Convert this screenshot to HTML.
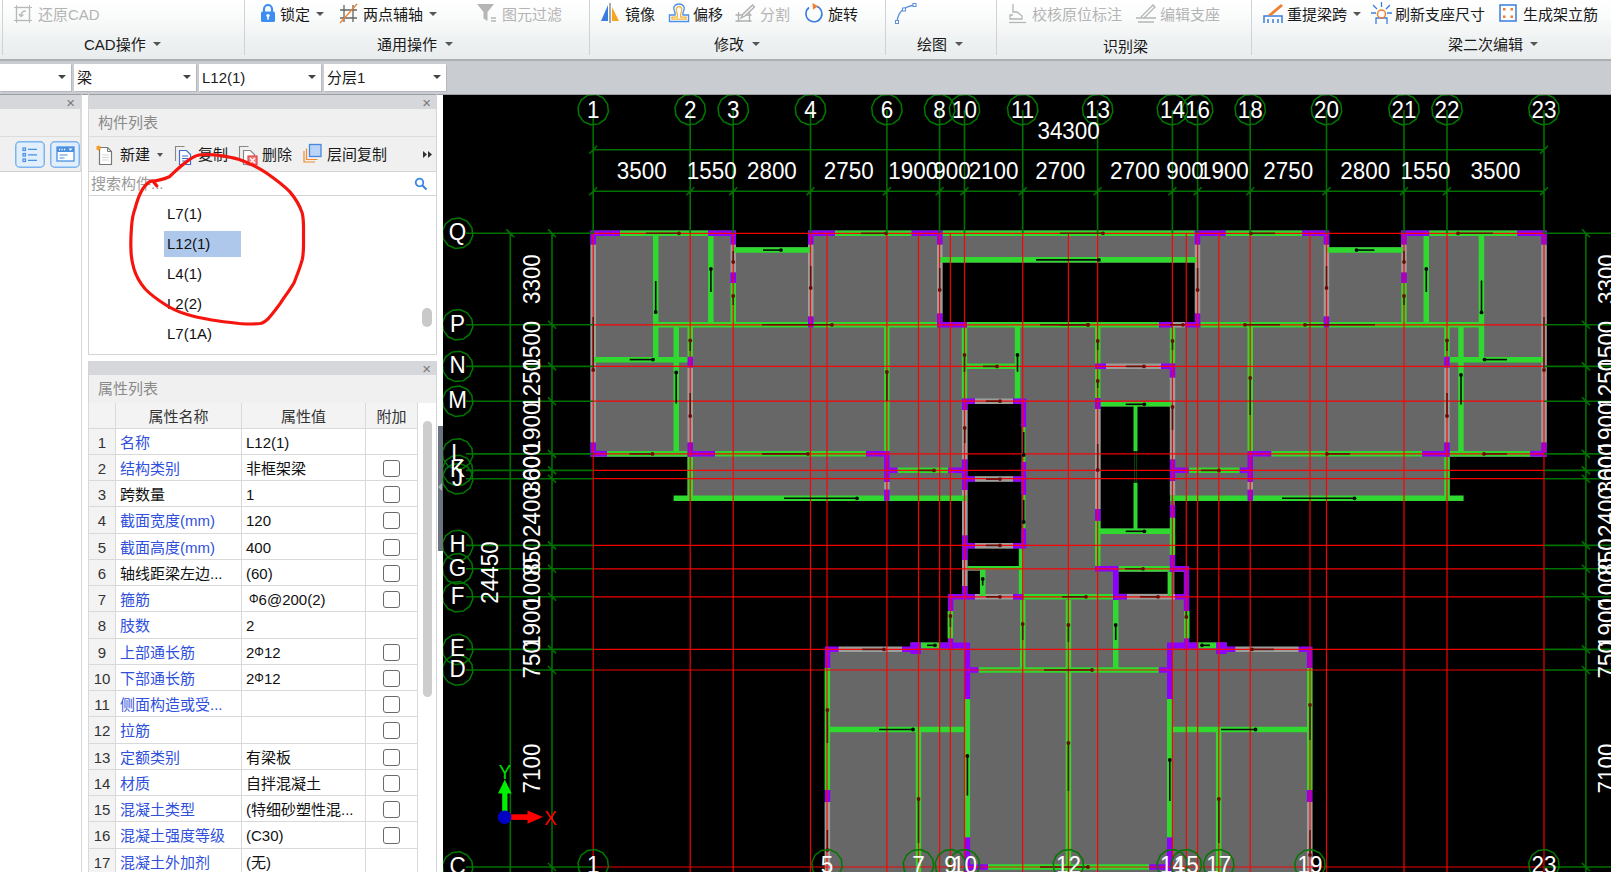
<!DOCTYPE html>
<html lang="zh-CN">
<head>
<meta charset="utf-8">
<title>CAD</title>
<style>
*{box-sizing:border-box;margin:0;padding:0}
html,body{width:1611px;height:872px;overflow:hidden;background:#fff}
body{position:relative;font-family:"Liberation Sans","Noto Sans CJK SC",sans-serif;font-size:15px;color:#1a1a1a}
.abs{position:absolute}
#ribbon{position:absolute;left:0;top:0;width:1611px;height:59px;background:linear-gradient(#ffffff 0%,#fafbfb 30%,#eef1f2 70%,#e9edee 100%)}
#ribbon .sep{position:absolute;top:0;width:1px;height:55px;background:#d0d2d5}
#ribbon .t{position:absolute;white-space:nowrap;line-height:20px;height:20px;font-size:15px;color:#1a1a1a}
#ribbon .g{color:#b4b4b4}
#ribbon .ar{position:absolute;width:0;height:0;border-left:4px solid transparent;border-right:4px solid transparent;border-top:4.5px solid #555}
#band{position:absolute;left:0;top:59px;width:1611px;height:36px;background:#c9ccd1;border-top:2px solid #acaeb2;border-bottom:1px solid #9b9da1}
.combo{position:absolute;top:64px;height:27px;background:#fff;box-shadow:1px 1px 0 #b6b8bd;font-size:15px;line-height:27.500px;padding-left:3px;white-space:nowrap}
.combo i{position:absolute;right:5px;top:11px;width:0;height:0;border-left:4px solid transparent;border-right:4px solid transparent;border-top:4.5px solid #444}
.phead{position:absolute;background:#d6d7db;height:15px}
.phead b{position:absolute;right:6px;top:-1px;font-weight:normal;font-size:15px;color:#777;line-height:18px}
.panel{position:absolute;background:#f0f0f0}
.ptitle{position:absolute;font-size:15px;color:#8a8a8a;line-height:20px;white-space:nowrap}
#tbl{position:absolute;left:88px;top:403px;width:330px;height:469px;overflow:hidden;background:#fff}
#tbl .r{position:absolute;left:0;width:330px;height:27px;border-bottom:1px solid #d9d9d9}
#tbl .c{position:absolute;top:0;height:100%;border-right:1px solid #d9d9d9;line-height:27.500px;white-space:nowrap;overflow:hidden;font-size:15px}
#tbl .c0{left:0;width:28px;background:#f3f3f3;text-align:center;color:#333;border-left:1px solid #d9d9d9}
#tbl .c1{left:28px;width:126px;padding-left:4px;color:#3050dc}
#tbl .c2{left:154px;width:124px;padding-left:4px;color:#111}
#tbl .c3{left:278px;width:52px}
#tbl .k{color:#111}
#tbl .h .c{background:#f3f3f3;text-align:center;color:#333;padding-left:0}
#tbl .cb{position:absolute;left:17px;top:5px;width:17px;height:17px;border:1.3px solid #6a6a6a;border-radius:3px;background:#fff}
.li{position:absolute;left:167px;font-size:15px;line-height:20px;white-space:nowrap;color:#111}
</style>
</head>
<body>
<div id="ribbon">
  <div class="sep" style="left:2px"></div>
  <div class="sep" style="left:244px"></div>
  <div class="sep" style="left:589px"></div>
  <div class="sep" style="left:885px"></div>
  <div class="sep" style="left:996px"></div>
  <div class="sep" style="left:1251px"></div>

  <!-- CAD操作 group -->
  <svg class="abs" style="left:13px;top:4px" width="20" height="20" viewBox="0 0 20 20"><g fill="none" stroke="#b9b9b9" stroke-width="1.4"><rect x="3.5" y="3.5" width="13" height="13"/><path d="M1 3.5h18M1 16.5h18M3.5 1v18M16.5 1v18" stroke-width="1"/><path d="M13 7c-3 0-5 2-5 5M6 10l2 2.5 2.5-2"/></g></svg>
  <div class="t g" style="left:38px;top:5px">还原CAD</div>
  <div class="t" style="left:84px;top:35px">CAD操作</div><div class="ar" style="left:153px;top:42px"></div>

  <!-- 通用操作 group -->
  <svg class="abs" style="left:260px;top:3px" width="16" height="20" viewBox="0 0 16 20"><path d="M4 9V6a4 4 0 0 1 8 0v3" fill="none" stroke="#3c8ef0" stroke-width="2.2"/><rect x="1" y="8.5" width="14" height="10.5" rx="1.5" fill="#3c8ef0"/><circle cx="8" cy="12.6" r="1.7" fill="#fff"/><rect x="7.2" y="13" width="1.6" height="3.6" fill="#fff"/></svg>
  <div class="t" style="left:280px;top:5px">锁定</div><div class="ar" style="left:316px;top:12px"></div>
  <svg class="abs" style="left:338px;top:3px" width="21" height="21" viewBox="0 0 21 21"><g fill="none" stroke="#666" stroke-width="1.3"><path d="M6 2v17M15 2v17M2 7h17M2 15h17"/></g><path d="M2 20L19 1" stroke="#f08030" stroke-width="1.3"/></svg>
  <div class="t" style="left:363px;top:5px">两点辅轴</div><div class="ar" style="left:429px;top:12px"></div>
  <svg class="abs" style="left:476px;top:3px" width="22" height="20" viewBox="0 0 22 20"><path d="M1 1h17l-6.5 8v9l-4-2.5V9z" fill="#b5b5b5"/><path d="M15 15h5M15 18h5" stroke="#b5b5b5" stroke-width="1.3"/></svg>
  <div class="t g" style="left:502px;top:5px">图元过滤</div>
  <div class="t" style="left:377px;top:35px">通用操作</div><div class="ar" style="left:445px;top:42px"></div>

  <!-- 修改 group -->
  <svg class="abs" style="left:600px;top:3px" width="20" height="20" viewBox="0 0 20 20"><path d="M8 2v16H1z" fill="#3a7de0"/><path d="M12 4v14h7z" fill="#f5a623"/><path d="M10 0v20" stroke="#555" stroke-width="1"/></svg>
  <div class="t" style="left:625px;top:5px">镜像</div>
  <svg class="abs" style="left:668px;top:3px" width="22" height="20" viewBox="0 0 22 20"><path d="M1.500 18.500v-6.500h5.500c0.500-1.500 0-3-0.800-4.500c-1.500-3 0.500-6.500 4.800-6.500s6.300 3.500 4.800 6.500c-0.800 1.500-1.300 3-0.800 4.500h5.500v6.500z" fill="#fff" stroke="#4a8fe8" stroke-width="1.400"/><path d="M4 16.200v-2h5.300c0.800-2.500 0-4.500-0.800-6c-1-2 0.300-4.700 2.500-4.700s3.500 2.700 2.500 4.700c-0.800 1.500-1.600 3.500-0.800 6h5.300v2z" fill="none" stroke="#f5b23a" stroke-width="1.300"/></svg>
  <div class="t" style="left:693px;top:5px">偏移</div>
  <svg class="abs" style="left:735px;top:3px" width="22" height="20" viewBox="0 0 22 20"><g fill="none" stroke="#b0b0b0" stroke-width="1.300"><path d="M0.500 12h16M3.500 9v10M14.500 9v10M0.500 18h16"/><path d="M6 15l2-4 9.500-9 2 2-9.500 9z" fill="#f4f4f4"/></g></svg>
  <div class="t g" style="left:760px;top:5px">分割</div>
  <svg class="abs" style="left:804px;top:3px" width="20" height="21" viewBox="0 0 20 21"><path d="M12.5 3.2A8 8 0 1 1 5 4.5" fill="none" stroke="#3a7de0" stroke-width="1.6"/><path d="M8.5 0l5.5 3.2-5 3.6z" fill="#f08030"/></svg>
  <div class="t" style="left:828px;top:5px">旋转</div>
  <div class="t" style="left:714px;top:35px">修改</div><div class="ar" style="left:752px;top:42px"></div>

  <!-- 绘图 group -->
  <svg class="abs" style="left:894px;top:2px" width="24" height="22" viewBox="0 0 24 22"><path d="M3 20C4 10 9 5 20 3" fill="none" stroke="#5b8fd8" stroke-width="1.4"/><rect x="1.5" y="18.5" width="3" height="3" fill="#fff" stroke="#5b8fd8"/><rect x="8.5" y="6" width="3" height="3" fill="#fff" stroke="#5b8fd8"/><rect x="19" y="1.5" width="3" height="3" fill="#fff" stroke="#5b8fd8"/></svg>
  <div class="t" style="left:917px;top:35px">绘图</div><div class="ar" style="left:955px;top:42px"></div>

  <!-- 识别梁 group -->
  <svg class="abs" style="left:1008px;top:3px" width="20" height="21" viewBox="0 0 20 21"><g fill="none" stroke="#b5b5b5" stroke-width="1.3"><path d="M5 1v8h4l5 4v3H2v-4h3"/><path d="M1 19.5h17"/></g></svg>
  <div class="t g" style="left:1032px;top:5px">校核原位标注</div>
  <svg class="abs" style="left:1135px;top:4px" width="22" height="20" viewBox="0 0 22 20"><g fill="none" stroke="#b5b5b5" stroke-width="1.3"><path d="M1 14h20M3 18h16"/><path d="M6 13L18 1l2 2L9 14"/></g></svg>
  <div class="t g" style="left:1160px;top:5px">编辑支座</div>
  <div class="t" style="left:1103px;top:37px">识别梁</div>

  <!-- 梁二次编辑 group -->
  <svg class="abs" style="left:1262px;top:3px" width="22" height="21" viewBox="0 0 22 21"><path d="M2 20v-7h18v7M6 20v-4M11 20v-4M16 20v-4" fill="none" stroke="#3a7de0" stroke-width="1.5"/><path d="M6 12L19 1l2 2L9 13z" fill="#f08030"/></svg>
  <div class="t" style="left:1287px;top:5px">重提梁跨</div><div class="ar" style="left:1353px;top:12px"></div>
  <svg class="abs" style="left:1371px;top:2px" width="21" height="23" viewBox="0 0 21 23"><g fill="none" stroke="#3a7de0" stroke-width="1.3"><path d="M10.5 0v5M2 3l4 4M19 3l-4 4M0 11h5M16 11h5"/><path d="M5 22v-6h11v6"/></g><circle cx="10.5" cy="12" r="4" fill="none" stroke="#f08030" stroke-width="1.5"/></svg>
  <div class="t" style="left:1395px;top:5px">刷新支座尺寸</div>
  <svg class="abs" style="left:1499px;top:4px" width="18" height="18" viewBox="0 0 18 18"><rect x="1" y="1" width="16" height="16" fill="none" stroke="#3a7de0" stroke-width="1.5"/><g fill="#f08030"><rect x="4" y="4" width="2.5" height="2.5"/><rect x="11.5" y="4" width="2.5" height="2.5"/><rect x="4" y="11.5" width="2.5" height="2.5"/><rect x="11.5" y="11.5" width="2.5" height="2.5"/></g></svg>
  <div class="t" style="left:1523px;top:5px">生成架立筋</div>
  <div class="t" style="left:1448px;top:35px">梁二次编辑</div><div class="ar" style="left:1530px;top:42px"></div>
</div>

<div id="band"></div>
<div class="combo" style="left:0;width:71px"><i></i></div>
<div class="combo" style="left:74px;width:122px">梁<i></i></div>
<div class="combo" style="left:199px;width:122px">L12(1)<i></i></div>
<div class="combo" style="left:324px;width:122px">分层1<i></i></div>
<!-- left narrow panel -->
<div class="phead" style="left:0;top:95px;width:81px;height:14px"><b>×</b></div>
<div class="panel" style="left:0;top:109px;width:81px;height:63px;border-right:1px solid #dcdcdc"></div>
<div class="abs" style="left:0;top:136px;width:81px;height:1px;background:#dcdcdc"></div>
<div class="abs" style="left:0;top:171px;width:81px;height:1px;background:#d0d0d0"></div>
<div class="abs" style="left:81px;top:94px;width:1px;height:778px;background:#d8d8d8"></div>
<svg class="abs" style="left:15px;top:141px" width="66" height="28" viewBox="0 0 66 28"><rect x="0.75" y="0.75" width="28.5" height="25.5" rx="4" fill="#e1eefc" stroke="#7db4f0" stroke-width="1.5"/><g stroke="#4a8fe0" stroke-width="1.2" fill="none"><rect x="8" y="7" width="2.5" height="2.5"/><rect x="8" y="12.5" width="2.5" height="2.5"/><rect x="8" y="18" width="2.5" height="2.5"/><path d="M13 8.3h9M13 13.8h9M13 19.3h9"/></g><rect x="35.75" y="0.75" width="28.5" height="25.5" rx="4" fill="#e1eefc" stroke="#7db4f0" stroke-width="1.5"/><rect x="42" y="6" width="17" height="14" fill="#fff" stroke="#4a8fe0" stroke-width="1.3"/><rect x="42" y="6" width="17" height="5" fill="#4a8fe0"/><path d="M44 8.500h1.200M46.500 8.500h1.200M49 8.500h1.200" stroke="#fff" stroke-width="1.500"/><path d="M53.500 7.500h4l-2 2.300z" fill="#fff"/><path d="M44.5 14h8M44.5 17h5" stroke="#4a8fe0" stroke-width="1.2"/></svg>

<!-- 构件列表 panel -->
<div class="phead" style="left:88px;top:95px;width:349px;height:14px"><b>×</b></div>
<div class="panel" style="left:88px;top:109px;width:349px;height:63px"></div>
<div class="abs" style="left:88px;top:136px;width:349px;height:1px;background:#dcdcdc"></div>
<div class="abs" style="left:88px;top:171px;width:349px;height:1px;background:#d4d4d4"></div>
<div class="abs" style="left:88px;top:195px;width:349px;height:1px;background:#d4d4d4"></div>
<div class="abs" style="left:88px;top:94px;width:349px;height:261px;border:1px solid #d4d4d4;border-top:none"></div>
<div class="ptitle" style="left:98px;top:113px">构件列表</div>
<!-- toolbar -->
<svg class="abs" style="left:95px;top:145px" width="20" height="21" viewBox="0 0 20 21"><path d="M4.5 2.5h8l4 4v13h-12z" fill="#fff" stroke="#777" stroke-width="1.2"/><path d="M12.5 2.5v4h4" fill="none" stroke="#777" stroke-width="1"/><path d="M7 10h7M7 12.5h7M7 15h7" stroke="#d5d5d5" stroke-width="1"/><path d="M1 3h5M3.5 0.5v5M1.7 1.2l3.6 3.6M5.3 1.2L1.7 4.8" stroke="#f59a23" stroke-width="1.1"/></svg>
<div class="abs" style="left:120px;top:145px;line-height:20px;white-space:nowrap">新建</div>
<div class="abs" style="left:157px;top:153px;width:0;height:0;border-left:3.5px solid transparent;border-right:3.5px solid transparent;border-top:4px solid #555"></div>
<svg class="abs" style="left:174px;top:145px" width="19" height="21" viewBox="0 0 19 21"><path d="M1.5 16V1.5h9" fill="none" stroke="#888" stroke-width="1.1"/><path d="M5.5 5.5h7l4 4v10h-11z" fill="#fff" stroke="#3a6fd0" stroke-width="1.2"/><path d="M8 11h6M8 13.5h6M8 16h6" stroke="#3a6fd0" stroke-width="1.1"/></svg>
<div class="abs" style="left:198px;top:145px;line-height:20px;white-space:nowrap">复制</div>
<svg class="abs" style="left:238px;top:145px" width="20" height="21" viewBox="0 0 20 21"><path d="M1.5 16V1.5h9" fill="none" stroke="#888" stroke-width="1.1"/><path d="M5.5 5.5h7l4 4v10h-11z" fill="#fff" stroke="#888" stroke-width="1.2"/><rect x="10" y="11" width="9" height="9" fill="#f08080" stroke="#e03838" stroke-width="1.1"/><path d="M12 13l5 5M17 13l-5 5" stroke="#fff" stroke-width="1.3"/></svg>
<div class="abs" style="left:262px;top:145px;line-height:20px;white-space:nowrap">删除</div>
<svg class="abs" style="left:303px;top:143px" width="20" height="21" viewBox="0 0 20 21"><path d="M1 8v11h11" fill="none" stroke="#f08a30" stroke-width="1.2"/><path d="M3.5 5.500v11h11" fill="none" stroke="#f08a30" stroke-width="1.2"/><rect x="6.5" y="1.500" width="11.500" height="12" fill="#b9d4f6" stroke="#4a86dc" stroke-width="1.3"/></svg>
<div class="abs" style="left:327px;top:145px;line-height:20px;white-space:nowrap">层间复制</div>
<svg class="abs" style="left:422px;top:150px" width="11" height="9" viewBox="0 0 11 9"><path d="M1 1l4 3.500-4 3.500zM6 1l4 3.500-4 3.500z" fill="#333"/></svg>
<!-- search -->
<div class="abs" style="left:89px;top:172px;width:347px;height:23px;background:#fff"></div>
<div class="abs" style="left:91px;top:174px;line-height:20px;color:#9a9a9a;white-space:nowrap">搜索构件...</div>
<svg class="abs" style="left:414px;top:177px" width="14" height="14" viewBox="0 0 14 14"><circle cx="5.500" cy="5.500" r="3.800" fill="none" stroke="#3a86e0" stroke-width="1.800"/><path d="M8.500 8.500l4 4" stroke="#3a86e0" stroke-width="2.200"/></svg>
<!-- list -->
<div class="abs" style="left:89px;top:196px;width:347px;height:158px;background:#fff"></div>
<div class="abs" style="left:164px;top:231px;width:77px;height:26px;background:#aec8ec"></div>
<div class="li" style="top:204px">L7(1)</div>
<div class="li" style="top:234px">L12(1)</div>
<div class="li" style="top:264px">L4(1)</div>
<div class="li" style="top:294px">L2(2)</div>
<div class="li" style="top:324px">L7(1A)</div>
<div class="abs" style="left:422px;top:308px;width:10px;height:19px;border-radius:5px;background:#c9c9c9"></div>

<!-- 属性列表 panel -->
<div class="phead" style="left:88px;top:361px;width:349px;height:14px"><b>×</b></div>
<div class="panel" style="left:88px;top:375px;width:349px;height:28px"></div>
<div class="abs" style="left:88px;top:361px;width:349px;height:511px;border:1px solid #d4d4d4;border-top:none;border-bottom:none"></div>
<div class="ptitle" style="left:98px;top:379px">属性列表</div>
<div class="abs" style="left:418px;top:403px;width:18px;height:469px;background:#fff"></div>
<div class="abs" style="left:423px;top:421px;width:9px;height:276px;border-radius:5px;background:#cdcdcd"></div>
<!-- splitter -->
<div class="abs" style="left:437px;top:95px;width:6px;height:777px;background:#fff"></div>
<div class="abs" style="left:438px;top:426px;width:5px;height:125px;background:#6b7480"></div>
<div class="abs" style="left:438px;top:483px;width:0;height:0;border-top:4px solid transparent;border-bottom:4px solid transparent;border-right:4px solid #aab0b8"></div>
<div id="tbl">
<div class="r h" style="top:0;height:25.70px"><div class="c c0"></div><div class="c c1" style="color:#333">属性名称</div><div class="c c2">属性值</div><div class="c c3">附加</div></div>
<div class="r" style="top:25.70px;height:26.25px"><div class="c c0">1</div><div class="c c1">名称</div><div class="c c2">L12(1)</div><div class="c c3"></div></div>
<div class="r" style="top:51.95px;height:26.25px"><div class="c c0">2</div><div class="c c1">结构类别</div><div class="c c2">非框架梁</div><div class="c c3"><div class="cb"></div></div></div>
<div class="r" style="top:78.20px;height:26.25px"><div class="c c0">3</div><div class="c c1 k">跨数量</div><div class="c c2">1</div><div class="c c3"><div class="cb"></div></div></div>
<div class="r" style="top:104.45px;height:26.25px"><div class="c c0">4</div><div class="c c1">截面宽度(mm)</div><div class="c c2">120</div><div class="c c3"><div class="cb"></div></div></div>
<div class="r" style="top:130.70px;height:26.25px"><div class="c c0">5</div><div class="c c1">截面高度(mm)</div><div class="c c2">400</div><div class="c c3"><div class="cb"></div></div></div>
<div class="r" style="top:156.95px;height:26.25px"><div class="c c0">6</div><div class="c c1 k">轴线距梁左边...</div><div class="c c2">(60)</div><div class="c c3"><div class="cb"></div></div></div>
<div class="r" style="top:183.20px;height:26.25px"><div class="c c0">7</div><div class="c c1">箍筋</div><div class="c c2"><span style='font-size:12px;position:relative;top:-2px;margin-left:3px'>Φ</span>6@200(2)</div><div class="c c3"><div class="cb"></div></div></div>
<div class="r" style="top:209.45px;height:26.25px"><div class="c c0">8</div><div class="c c1">肢数</div><div class="c c2">2</div><div class="c c3"></div></div>
<div class="r" style="top:235.70px;height:26.25px"><div class="c c0">9</div><div class="c c1">上部通长筋</div><div class="c c2">2<span style='font-size:12px;position:relative;top:-2px'>Φ</span>12</div><div class="c c3"><div class="cb"></div></div></div>
<div class="r" style="top:261.95px;height:26.25px"><div class="c c0">10</div><div class="c c1">下部通长筋</div><div class="c c2">2<span style='font-size:12px;position:relative;top:-2px'>Φ</span>12</div><div class="c c3"><div class="cb"></div></div></div>
<div class="r" style="top:288.20px;height:26.25px"><div class="c c0">11</div><div class="c c1">侧面构造或受...</div><div class="c c2"></div><div class="c c3"><div class="cb"></div></div></div>
<div class="r" style="top:314.45px;height:26.25px"><div class="c c0">12</div><div class="c c1">拉筋</div><div class="c c2"></div><div class="c c3"><div class="cb"></div></div></div>
<div class="r" style="top:340.70px;height:26.25px"><div class="c c0">13</div><div class="c c1">定额类别</div><div class="c c2">有梁板</div><div class="c c3"><div class="cb"></div></div></div>
<div class="r" style="top:366.95px;height:26.25px"><div class="c c0">14</div><div class="c c1">材质</div><div class="c c2">自拌混凝土</div><div class="c c3"><div class="cb"></div></div></div>
<div class="r" style="top:393.20px;height:26.25px"><div class="c c0">15</div><div class="c c1">混凝土类型</div><div class="c c2">(特细砂塑性混...</div><div class="c c3"><div class="cb"></div></div></div>
<div class="r" style="top:419.45px;height:26.25px"><div class="c c0">16</div><div class="c c1">混凝土强度等级</div><div class="c c2">(C30)</div><div class="c c3"><div class="cb"></div></div></div>
<div class="r" style="top:445.70px;height:26.25px"><div class="c c0">17</div><div class="c c1">混凝土外加剂</div><div class="c c2">(无)</div><div class="c c3"></div></div>
</div>
<svg class="abs" style="left:443px;top:95px" width="1168" height="777" viewBox="443 95 1168 777" font-family="'Liberation Sans',sans-serif">
<rect x="442" y="94" width="1169" height="778" fill="#000"/>
<path fill="#676767" d="M590.5 230.6H1546.7V457H590.5ZM687.5 457H967V501H687.5ZM1170 457H1449.7V501H1170ZM962 457H1175V600H962ZM1175 566H1189V600H1175ZM948 594H1189V660H948ZM910.5 642.5H1226.7V660H910.5ZM825 647H1312.2V872H825Z"/>
<path fill="#000" d="M736 230H808V247.2H736ZM1329.2 230H1401.2V247.2H1329.2ZM942.5 262.7H1195V322H942.5ZM967.5 403H1021.5V476.5H967.5ZM967.5 481.5H1021.5V543H967.5ZM967.5 548.5H1019V566H967.5ZM967.5 571H980V594H967.5ZM1100.5 406.5H1170V528.5H1100.5ZM1118.5 572H1168V593.7H1118.5ZM1174.5 572H1184V594H1174.5Z"/>
<path fill="#9a9f9c" d="M590.5 244.5H596V442.5H590.5ZM1541.2 244.5H1546.7V442.5H1541.2ZM730.5 244.5H736V272.5H730.5ZM1401.2 244.5H1406.7V272.5H1401.2ZM808 244.5H813.5V316.5H808ZM1323.7 244.5H1329.2V316.5H1323.7ZM937 244.5H942.5V313.5H937ZM1194.7 244.5H1200.2V313.5H1194.7ZM687.5 367.6H693V442.5H687.5ZM1444.2 367.6H1449.7V442.5H1444.2ZM975 398.4H1013V403.9H975ZM975 476.3H1013V481.8H975ZM975 542.9H1013V548.4H975ZM975 594H1013V599.5H975ZM962 410H967.5V459.5H962ZM962 490H967.5V535.5H962ZM962 560H967.5V586H962ZM1106 363.6H1161V369.1H1106ZM1095 409H1100.5V509H1095ZM1169.8 377.5H1175.2V459.5H1169.8ZM1169.8 481H1175.2V495.5H1169.8ZM1127 594H1175V599.5H1127ZM1172 322.1H1185V327.6H1172ZM838.5 646.6H902V652.1H838.5ZM1235.2 646.6H1298.7V652.1H1235.2ZM824.6 802H830.1V872H824.6ZM1307 802H1312.5V872H1307ZM884.1 482H889.6V489.7H884.1ZM1247.5 482H1253V489.7H1247.5Z"/>
<path fill="#2fd92f" d="M620 230.6H708V236.1H620ZM1429.2 230.6H1517.2V236.1H1429.2ZM835 230.6H911.6V236.1H835ZM1225.6 230.6H1302.2V236.1H1225.6ZM942.6 230.6H1195V236.1H942.6ZM734 247.3H810V252.8H734ZM1327.2 247.3H1403.2V252.8H1327.2ZM940 257.1H1196.6V262.6H940ZM653 322.1H937V327.6H653ZM967 322.1H1159V327.6H967ZM1200.5 322.1H1484.2V327.6H1200.5ZM593.5 356.9H688.6V362.4H593.5ZM1448.6 356.9H1543.7V362.4H1448.6ZM967 363.6H1015V369.1H967ZM1100.5 402H1171.5V406.6H1100.5ZM607 451.1H687.5V456.6H607ZM1449.7 451.1H1530.2V456.6H1449.7ZM715 451.1H866V456.6H715ZM1271.2 451.1H1422.2V456.6H1271.2ZM897.5 467.6H948V473.1H897.5ZM1189.2 467.6H1239.7V473.1H1189.2ZM673.6 495.6H967V501.1H673.6ZM1170.2 495.6H1463.6V501.1H1170.2ZM1100.5 528.5H1170V534H1100.5ZM967.5 566H1022V569.6H967.5ZM1118.5 566H1170V571.5H1118.5ZM1023.4 594H1113V599.5H1023.4ZM921 642.5H939V648H921ZM1198.2 642.5H1216.2V648H1198.2ZM978.5 667.2H1159V672.8H978.5ZM830 726.8H964.5V732.2H830ZM1172.7 726.8H1307.2V732.2H1172.7ZM988 864.2H1149.2V869.8H988ZM653 236H658.5V362.3H653ZM1478.7 236H1484.2V362.3H1478.7ZM708.1 236H713.6V322.4H708.1ZM1423.5 236H1429V322.4H1423.5ZM730.5 283H736V322.4H730.5ZM1401.2 283H1406.7V322.4H1401.2ZM673.5 327H679V451.5H673.5ZM1458.2 327H1463.7V451.5H1458.2ZM687.5 327H693V357H687.5ZM1444.2 327H1449.7V357H1444.2ZM687.5 457H693V495.8H687.5ZM1444.2 457H1449.7V495.8H1444.2ZM884.1 327.5H889.6V451.5H884.1ZM1247.5 327.5H1253V451.5H1247.5ZM961.8 327.5H967.2V398.7H961.8ZM1014.8 327.5H1020.2V398.7H1014.8ZM1095 327.5H1100.5V398.5H1095ZM1169.8 327.5H1175.2V363.5H1169.8ZM1133.5 406H1137.5V451H1133.5ZM1133.5 482.7H1137.5V528.7H1133.5ZM1022 427H1025.4V462H1022ZM1022 495H1025.4V528.5H1022ZM1018.8 548.5H1023.2V594.2H1018.8ZM980 569.5H985.5V596H980ZM1167.6 572H1171.6V596H1167.6ZM1095 520.7H1100.5V566H1095ZM1169.8 517.6H1175.2V555H1169.8ZM947.6 611H953.1V638.6H947.6ZM1184 611H1189.5V638.6H1184ZM1113 600H1118.5V667.5H1113ZM1020 600H1025.5V667.5H1020ZM1065.7 600H1071.2V872H1065.7ZM964.6 699H970.1V837.5H964.6ZM1167 699H1172.5V837.5H1167ZM915.8 732H921.2V872H915.8ZM1215.9 732H1221.4V872H1215.9ZM824.6 668H830.1V790H824.6ZM1307 668H1312.5V790H1307Z"/>
<path d="M1134.6 451V482.7M1136.6 451V482.7" stroke="#0a5a0a" stroke-width="0.8" fill="none"/>
<path fill="#8d00ff" d="M590.5 230.6H620V236.1H590.5ZM1517.2 230.6H1546.7V236.1H1517.2ZM590.5 230.6H596V244.5H590.5ZM1541.2 230.6H1546.7V244.5H1541.2ZM708 230.6H736V236.1H708ZM1401.2 230.6H1429.2V236.1H1401.2ZM730.5 230.6H736V244.5H730.5ZM1401.2 230.6H1406.7V244.5H1401.2ZM808 230.6H835V236.1H808ZM1302.2 230.6H1329.2V236.1H1302.2ZM808 230.6H813.5V244.5H808ZM1323.7 230.6H1329.2V244.5H1323.7ZM911.6 230.6H942.6V236.1H911.6ZM1194.6 230.6H1225.6V236.1H1194.6ZM937 230.6H942.5V244.5H937ZM1194.7 230.6H1200.2V244.5H1194.7ZM730.5 272.5H736V283H730.5ZM1401.2 272.5H1406.7V283H1401.2ZM808 316.5H813.5V327.5H808ZM1323.7 316.5H1329.2V327.5H1323.7ZM937 313.5H942.5V327.5H937ZM1194.7 313.5H1200.2V327.5H1194.7ZM937 322.1H967V327.6H937ZM1159 322.1H1172V327.6H1159ZM1185 322.1H1200.3V327.6H1185ZM687.5 356.8H693V367.6H687.5ZM1444.2 356.8H1449.7V367.6H1444.2ZM590.5 442.5H596V456.8H590.5ZM1541.2 442.5H1546.7V456.8H1541.2ZM590.5 451.1H607V456.6H590.5ZM1530.2 451.1H1546.7V456.6H1530.2ZM687.5 442.5H693V456.8H687.5ZM1444.2 442.5H1449.7V456.8H1444.2ZM687.5 451.1H715V456.6H687.5ZM1422.2 451.1H1449.7V456.6H1422.2ZM866 451.1H889.6V456.6H866ZM1247.6 451.1H1271.2V456.6H1247.6ZM884.1 451.3H889.6V482H884.1ZM1247.5 451.3H1253V482H1247.5ZM884.1 489.7H889.6V500.8H884.1ZM1247.5 489.7H1253V500.8H1247.5ZM884.2 467.6H897.5V473.1H884.2ZM1239.7 467.6H1253V473.1H1239.7ZM948 467.6H967.2V473.1H948ZM1170 467.6H1188.6V473.1H1170ZM962 398.4H975V403.9H962ZM1013 398.4H1026.3V403.9H1013ZM962 476.3H975V481.8H962ZM1013 476.3H1026.3V481.8H1013ZM962 542.9H975V548.4H962ZM1013 542.9H1026.3V548.4H1013ZM962 398.5H967.5V410H962ZM962 459.5H967.5V490H962ZM962 535.5H967.5V560H962ZM962 586H967.5V597H962ZM1021.3 398.5H1026.1V427H1021.3ZM1021.3 462H1026.1V495H1021.3ZM1021.3 528.5H1026.1V548.5H1021.3ZM948 594H975V599.5H948ZM1013 594H1023.4V599.5H1013ZM947.9 594H953.4V611H947.9ZM1183.8 594H1189.3V611H1183.8ZM947.9 638.6H953.4V650H947.9ZM1183.8 638.6H1189.3V650H1183.8ZM1095 363.6H1106V369.1H1095ZM1161 363.6H1175.3V369.1H1161ZM1169.8 363.5H1175.2V377.5H1169.8ZM1095 398H1100.5V409H1095ZM1095 509H1100.5V520.7H1095ZM1169.8 459.5H1175.2V481H1169.8ZM1169.8 505H1175.2V517.6H1169.8ZM1169.8 555H1175.2V572H1169.8ZM1095 566H1118.5V571.5H1095ZM1113 566H1118.5V600H1113ZM1170 566H1189V571.5H1170ZM1183.8 566H1189.2V600H1183.8ZM1113 594H1127V599.5H1113ZM1175 594H1189V599.5H1175ZM825 646.6H838.5V652.1H825ZM1298.7 646.6H1312.2V652.1H1298.7ZM824.8 647H830.2V668H824.8ZM1306.9 647H1312.4V668H1306.9ZM902 646.6H921V652.1H902ZM1216.2 646.6H1235.2V652.1H1216.2ZM910.5 642.3H921V654H910.5ZM1216.2 642.3H1226.7V654H1216.2ZM939 642.5H970V648.5H939ZM1167.2 642.5H1198.2V648.5H1167.2ZM964.6 642.5H970.1V699H964.6ZM1167 642.5H1172.5V699H1167ZM965 667.2H978.5V672.8H965ZM1158.7 667.2H1172.2V672.8H1158.7ZM964.6 837.5H970.1V872H964.6ZM1167 837.5H1172.5V872H1167ZM970 864.2H988V869.8H970ZM1149.2 864.2H1167.2V869.8H1149.2ZM824.8 790H830.2V802H824.8ZM1306.9 790H1312.4V802H1306.9Z"/>
<path d="M593.2 233.3V872M690.2 233.3V872M733.2 233.3V872M810.5 233.3V872M827 233.3V872M886.9 233.3V872M918.5 233.3V872M939.6 233.3V872M950.4 233.3V872M964.5 233.3V872M1022.7 233.3V872M1068.4 233.3V872M1097.6 233.3V872M1172.4 233.3V872M1186.3 233.3V872M1197.6 233.3V872M1218.8 233.3V872M1250.2 233.3V872M1310 233.3V872M1326.5 233.3V872M1404 233.3V872M1447 233.3V872M1544 233.3V872M593.2 233.3H1544M593.2 324.8H1544M593.2 366.4H1544M593.2 401.2H1544M593.2 453.9H1544M593.2 470.4H1544M593.2 478.7H1544M593.2 545.4H1544M593.2 568.8H1544M593.2 596.8H1544M593.2 649.4H1544M593.2 670H1544M593.2 867H1544" stroke="#ff0000" stroke-width="1.2" stroke-opacity="0.95" fill="none"/>
<g><path d="M655.7 281L655.7 312" stroke="#0a0a0a" stroke-width="1.6" fill="none"/><circle cx="655.7" cy="312" r="1.9" fill="#0a0a0a"/><path d="M710.9 292L710.9 269" stroke="#0a0a0a" stroke-width="1.6" fill="none"/><circle cx="710.9" cy="269" r="1.9" fill="#0a0a0a"/><path d="M763 250.1L781 250.1" stroke="#0a0a0a" stroke-width="1.6" fill="none"/><circle cx="781" cy="250.1" r="1.9" fill="#0a0a0a"/><path d="M1036 259.9L1099 259.9" stroke="#0a0a0a" stroke-width="1.6" fill="none"/><circle cx="1099" cy="259.9" r="1.9" fill="#0a0a0a"/><path d="M629.7 359.6L653 359.6" stroke="#0a0a0a" stroke-width="1.6" fill="none"/><circle cx="653" cy="359.6" r="1.9" fill="#0a0a0a"/><path d="M676.2 403.5L676.2 372.5" stroke="#0a0a0a" stroke-width="1.6" fill="none"/><circle cx="676.2" cy="372.5" r="1.9" fill="#0a0a0a"/><path d="M784 498.3L857 498.3" stroke="#0a0a0a" stroke-width="1.6" fill="none"/><circle cx="857" cy="498.3" r="1.9" fill="#0a0a0a"/><path d="M1282 498.3L1354.5 498.3" stroke="#0a0a0a" stroke-width="1.6" fill="none"/><circle cx="1354.5" cy="498.3" r="1.9" fill="#0a0a0a"/><path d="M879 729.5L913 729.5" stroke="#0a0a0a" stroke-width="1.6" fill="none"/><circle cx="913" cy="729.5" r="1.9" fill="#0a0a0a"/><path d="M1221 729.5L1255.5 729.5" stroke="#0a0a0a" stroke-width="1.6" fill="none"/><circle cx="1255.5" cy="729.5" r="1.9" fill="#0a0a0a"/><path d="M967.4 795.5L967.4 756" stroke="#0a0a0a" stroke-width="1.6" fill="none"/><circle cx="967.4" cy="756" r="1.9" fill="#0a0a0a"/><path d="M1169.8 801L1169.8 760" stroke="#0a0a0a" stroke-width="1.6" fill="none"/><circle cx="1169.8" cy="760" r="1.9" fill="#0a0a0a"/><path d="M1017.5 371.8L1017.5 355" stroke="#0a0a0a" stroke-width="1.6" fill="none"/><circle cx="1017.5" cy="355" r="1.9" fill="#0a0a0a"/><path d="M1115.7 640L1115.7 625" stroke="#0a0a0a" stroke-width="1.6" fill="none"/><circle cx="1115.7" cy="625" r="1.9" fill="#0a0a0a"/><path d="M982.7 585.5L982.7 579" stroke="#0a0a0a" stroke-width="1.6" fill="none"/><circle cx="982.7" cy="579" r="1.9" fill="#0a0a0a"/><path d="M1426.3 292L1426.3 269" stroke="#0a0a0a" stroke-width="1.6" fill="none"/><circle cx="1426.3" cy="269" r="1.9" fill="#0a0a0a"/><path d="M1481.5 280.5L1481.5 312.4" stroke="#0a0a0a" stroke-width="1.6" fill="none"/><circle cx="1481.5" cy="312.4" r="1.9" fill="#0a0a0a"/><path d="M1374.5 250.1L1356.5 250.1" stroke="#0a0a0a" stroke-width="1.6" fill="none"/><circle cx="1356.5" cy="250.1" r="1.9" fill="#0a0a0a"/><path d="M1507 359.6L1484.5 359.6" stroke="#0a0a0a" stroke-width="1.6" fill="none"/><circle cx="1484.5" cy="359.6" r="1.9" fill="#0a0a0a"/><path d="M1461 404.6L1461 375" stroke="#0a0a0a" stroke-width="1.6" fill="none"/><circle cx="1461" cy="375" r="1.9" fill="#0a0a0a"/><path d="M1125.7 404.3L1144.3 404.3" stroke="#0a0a0a" stroke-width="1.6" fill="none"/><circle cx="1144.3" cy="404.3" r="1.9" fill="#0a0a0a"/><path d="M1125.7 531.3L1144.3 531.3" stroke="#0a0a0a" stroke-width="1.6" fill="none"/><circle cx="1144.3" cy="531.3" r="1.9" fill="#0a0a0a"/><path d="M927 645.3L935 645.3" stroke="#0a0a0a" stroke-width="1.6" fill="none"/><circle cx="935" cy="645.3" r="1.9" fill="#0a0a0a"/><path d="M1210 645.3L1202 645.3" stroke="#0a0a0a" stroke-width="1.6" fill="none"/><circle cx="1202" cy="645.3" r="1.9" fill="#0a0a0a"/><path d="M646 233.3L679 233.3" stroke="#6e0a00" stroke-width="1.6" fill="none"/><circle cx="679" cy="233.3" r="1.9" fill="#6e0a00"/><path d="M861 233.3L886 233.3" stroke="#6e0a00" stroke-width="1.6" fill="none"/><circle cx="886" cy="233.3" r="1.9" fill="#6e0a00"/><path d="M1060 233.3L1103 233.3" stroke="#6e0a00" stroke-width="1.6" fill="none"/><circle cx="1103" cy="233.3" r="1.9" fill="#6e0a00"/><path d="M1275 233.3L1251 233.3" stroke="#6e0a00" stroke-width="1.6" fill="none"/><circle cx="1251" cy="233.3" r="1.9" fill="#6e0a00"/><path d="M1493 233.3L1458 233.3" stroke="#6e0a00" stroke-width="1.6" fill="none"/><circle cx="1458" cy="233.3" r="1.9" fill="#6e0a00"/><path d="M762 324.8L832 324.8" stroke="#6e0a00" stroke-width="1.6" fill="none"/><circle cx="832" cy="324.8" r="1.9" fill="#6e0a00"/><path d="M1040 324.8L1088 324.8" stroke="#6e0a00" stroke-width="1.6" fill="none"/><circle cx="1088" cy="324.8" r="1.9" fill="#6e0a00"/><path d="M1060 324.8L1088 324.8" stroke="#6e0a00" stroke-width="1.6" fill="none"/><circle cx="1088" cy="324.8" r="1.9" fill="#6e0a00"/><path d="M1375 324.8L1305 324.8" stroke="#6e0a00" stroke-width="1.6" fill="none"/><circle cx="1305" cy="324.8" r="1.9" fill="#6e0a00"/><path d="M1170 324.8L1183 324.8" stroke="#6e0a00" stroke-width="1.6" fill="none"/><circle cx="1183" cy="324.8" r="1.9" fill="#6e0a00"/><path d="M1280 324.8L1245 324.8" stroke="#6e0a00" stroke-width="1.6" fill="none"/><circle cx="1245" cy="324.8" r="1.9" fill="#6e0a00"/><path d="M733.2 305L733.2 296" stroke="#6e0a00" stroke-width="1.6" fill="none"/><circle cx="733.2" cy="296" r="1.9" fill="#6e0a00"/><path d="M733.2 251L733.2 262" stroke="#6e0a00" stroke-width="1.6" fill="none"/><circle cx="733.2" cy="262" r="1.9" fill="#6e0a00"/><path d="M810.7 266L810.7 288" stroke="#6e0a00" stroke-width="1.6" fill="none"/><circle cx="810.7" cy="288" r="1.9" fill="#6e0a00"/><path d="M939.7 268L939.7 290" stroke="#6e0a00" stroke-width="1.6" fill="none"/><circle cx="939.7" cy="290" r="1.9" fill="#6e0a00"/><path d="M1197.6 268L1197.6 290" stroke="#6e0a00" stroke-width="1.6" fill="none"/><circle cx="1197.6" cy="290" r="1.9" fill="#6e0a00"/><path d="M1326.5 266L1326.5 288" stroke="#6e0a00" stroke-width="1.6" fill="none"/><circle cx="1326.5" cy="288" r="1.9" fill="#6e0a00"/><path d="M1404 251L1404 262" stroke="#6e0a00" stroke-width="1.6" fill="none"/><circle cx="1404" cy="262" r="1.9" fill="#6e0a00"/><path d="M1404 305L1404 296" stroke="#6e0a00" stroke-width="1.6" fill="none"/><circle cx="1404" cy="296" r="1.9" fill="#6e0a00"/><path d="M593.2 317L593.2 370" stroke="#6e0a00" stroke-width="1.6" fill="none"/><circle cx="593.2" cy="370" r="1.9" fill="#6e0a00"/><path d="M1544 317L1544 370" stroke="#6e0a00" stroke-width="1.6" fill="none"/><circle cx="1544" cy="370" r="1.9" fill="#6e0a00"/><path d="M690.2 351L690.2 340.5" stroke="#6e0a00" stroke-width="1.6" fill="none"/><circle cx="690.2" cy="340.5" r="1.9" fill="#6e0a00"/><path d="M690.2 393L690.2 416" stroke="#6e0a00" stroke-width="1.6" fill="none"/><circle cx="690.2" cy="416" r="1.9" fill="#6e0a00"/><path d="M1447 351L1447 340.5" stroke="#6e0a00" stroke-width="1.6" fill="none"/><circle cx="1447" cy="340.5" r="1.9" fill="#6e0a00"/><path d="M1447 393L1447 416" stroke="#6e0a00" stroke-width="1.6" fill="none"/><circle cx="1447" cy="416" r="1.9" fill="#6e0a00"/><path d="M629.5 453.9L652.5 453.9" stroke="#6e0a00" stroke-width="1.6" fill="none"/><circle cx="652.5" cy="453.9" r="1.9" fill="#6e0a00"/><path d="M762 453.9L808 453.9" stroke="#6e0a00" stroke-width="1.6" fill="none"/><circle cx="808" cy="453.9" r="1.9" fill="#6e0a00"/><path d="M1350 453.9L1327 453.9" stroke="#6e0a00" stroke-width="1.6" fill="none"/><circle cx="1327" cy="453.9" r="1.9" fill="#6e0a00"/><path d="M1507 453.9L1484 453.9" stroke="#6e0a00" stroke-width="1.6" fill="none"/><circle cx="1484" cy="453.9" r="1.9" fill="#6e0a00"/><path d="M886.9 401L886.9 372" stroke="#6e0a00" stroke-width="1.6" fill="none"/><circle cx="886.9" cy="372" r="1.9" fill="#6e0a00"/><path d="M1250.2 415L1250.2 378" stroke="#6e0a00" stroke-width="1.6" fill="none"/><circle cx="1250.2" cy="378" r="1.9" fill="#6e0a00"/><path d="M964.5 372L964.5 355" stroke="#6e0a00" stroke-width="1.6" fill="none"/><circle cx="964.5" cy="355" r="1.9" fill="#6e0a00"/><path d="M983 366.4L997 366.4" stroke="#6e0a00" stroke-width="1.6" fill="none"/><circle cx="997" cy="366.4" r="1.9" fill="#6e0a00"/><path d="M918 470.4L934 470.4" stroke="#6e0a00" stroke-width="1.6" fill="none"/><circle cx="934" cy="470.4" r="1.9" fill="#6e0a00"/><path d="M1201 470.4L1219 470.4" stroke="#6e0a00" stroke-width="1.6" fill="none"/><circle cx="1219" cy="470.4" r="1.9" fill="#6e0a00"/><path d="M1097.7 350L1097.7 341" stroke="#6e0a00" stroke-width="1.6" fill="none"/><circle cx="1097.7" cy="341" r="1.9" fill="#6e0a00"/><path d="M1172.5 350L1172.5 341" stroke="#6e0a00" stroke-width="1.6" fill="none"/><circle cx="1172.5" cy="341" r="1.9" fill="#6e0a00"/><path d="M1097.7 388L1097.7 381" stroke="#6e0a00" stroke-width="1.6" fill="none"/><circle cx="1097.7" cy="381" r="1.9" fill="#6e0a00"/><path d="M1126 366.4L1144 366.4" stroke="#6e0a00" stroke-width="1.6" fill="none"/><circle cx="1144" cy="366.4" r="1.9" fill="#6e0a00"/><path d="M986 401.2L1000 401.2" stroke="#6e0a00" stroke-width="1.6" fill="none"/><circle cx="1000" cy="401.2" r="1.9" fill="#6e0a00"/><path d="M986 479.1L1000 479.1" stroke="#6e0a00" stroke-width="1.6" fill="none"/><circle cx="1000" cy="479.1" r="1.9" fill="#6e0a00"/><path d="M986 545.4L1000 545.4" stroke="#6e0a00" stroke-width="1.6" fill="none"/><circle cx="1000" cy="545.4" r="1.9" fill="#6e0a00"/><path d="M986 596.8L1000 596.8" stroke="#6e0a00" stroke-width="1.6" fill="none"/><circle cx="1000" cy="596.8" r="1.9" fill="#6e0a00"/><path d="M1140 596.8L1158 596.8" stroke="#6e0a00" stroke-width="1.6" fill="none"/><circle cx="1158" cy="596.8" r="1.9" fill="#6e0a00"/><path d="M1062 596.8L1086 596.8" stroke="#6e0a00" stroke-width="1.6" fill="none"/><circle cx="1086" cy="596.8" r="1.9" fill="#6e0a00"/><path d="M1125 568.8L1143 568.8" stroke="#6e0a00" stroke-width="1.6" fill="none"/><circle cx="1143" cy="568.8" r="1.9" fill="#6e0a00"/><path d="M964.7 443L964.7 428" stroke="#6e0a00" stroke-width="1.6" fill="none"/><circle cx="964.7" cy="428" r="1.9" fill="#6e0a00"/><path d="M1023.7 432L1023.7 455" stroke="#0a0a0a" stroke-width="1.6" fill="none"/><circle cx="1023.7" cy="455" r="1.9" fill="#0a0a0a"/><path d="M1023.7 500L1023.7 522" stroke="#0a0a0a" stroke-width="1.6" fill="none"/><circle cx="1023.7" cy="522" r="1.9" fill="#0a0a0a"/><path d="M1172.5 430L1172.5 407" stroke="#6e0a00" stroke-width="1.6" fill="none"/><circle cx="1172.5" cy="407" r="1.9" fill="#6e0a00"/><path d="M1097.7 444L1097.7 470" stroke="#6e0a00" stroke-width="1.6" fill="none"/><circle cx="1097.7" cy="470" r="1.9" fill="#6e0a00"/><path d="M950.4 627L950.4 616" stroke="#6e0a00" stroke-width="1.6" fill="none"/><circle cx="950.4" cy="616" r="1.9" fill="#6e0a00"/><path d="M1186.3 611L1186.3 617" stroke="#6e0a00" stroke-width="1.6" fill="none"/><circle cx="1186.3" cy="617" r="1.9" fill="#6e0a00"/><path d="M1022.7 640L1022.7 624" stroke="#6e0a00" stroke-width="1.6" fill="none"/><circle cx="1022.7" cy="624" r="1.9" fill="#6e0a00"/><path d="M1068.4 642L1068.4 625" stroke="#6e0a00" stroke-width="1.6" fill="none"/><circle cx="1068.4" cy="625" r="1.9" fill="#6e0a00"/><path d="M862 649.4L884 649.4" stroke="#6e0a00" stroke-width="1.6" fill="none"/><circle cx="884" cy="649.4" r="1.9" fill="#6e0a00"/><path d="M1274 649.4L1252 649.4" stroke="#6e0a00" stroke-width="1.6" fill="none"/><circle cx="1252" cy="649.4" r="1.9" fill="#6e0a00"/><path d="M1044 670L1092 670" stroke="#6e0a00" stroke-width="1.6" fill="none"/><circle cx="1092" cy="670" r="1.9" fill="#6e0a00"/><path d="M827.4 743L827.4 710" stroke="#6e0a00" stroke-width="1.6" fill="none"/><circle cx="827.4" cy="710" r="1.9" fill="#6e0a00"/><path d="M1310 740L1310 705" stroke="#6e0a00" stroke-width="1.6" fill="none"/><circle cx="1310" cy="705" r="1.9" fill="#6e0a00"/><path d="M918.5 843L918.5 799" stroke="#6e0a00" stroke-width="1.6" fill="none"/><circle cx="918.5" cy="799" r="1.9" fill="#6e0a00"/><path d="M1218.8 843L1218.8 799" stroke="#6e0a00" stroke-width="1.6" fill="none"/><circle cx="1218.8" cy="799" r="1.9" fill="#6e0a00"/><path d="M1068.4 791L1068.4 743" stroke="#6e0a00" stroke-width="1.6" fill="none"/><circle cx="1068.4" cy="743" r="1.9" fill="#6e0a00"/><path d="M827.4 830L827.4 850" stroke="#6e0a00" stroke-width="1.6" fill="none"/><circle cx="827.4" cy="850" r="1.9" fill="#6e0a00"/><path d="M1310 830L1310 855" stroke="#6e0a00" stroke-width="1.6" fill="none"/><circle cx="1310" cy="855" r="1.9" fill="#6e0a00"/><path d="M1040 867L1088 867" stroke="#6e0a00" stroke-width="1.6" fill="none"/><circle cx="1088" cy="867" r="1.9" fill="#6e0a00"/></g>
<path d="M593.2 110V233.3M690.2 110V233.3M733.2 110V233.3M810.5 110V233.3M886.9 110V233.3M939.6 110V233.3M964.5 110V233.3M1022.7 110V233.3M1097.6 110V233.3M1172.4 110V233.3M1197.6 110V233.3M1250.2 110V233.3M1326.5 110V233.3M1404 110V233.3M1447 110V233.3M1544 110V233.3M593.2 149.8H1544M593.2 191.3H1544M589.2 153.8l8 -8M1540 153.8l8 -8M589.2 195.3l8 -8M686.2 195.3l8 -8M729.2 195.3l8 -8M806.5 195.3l8 -8M882.9 195.3l8 -8M935.6 195.3l8 -8M960.5 195.3l8 -8M1018.7 195.3l8 -8M1093.6 195.3l8 -8M1168.4 195.3l8 -8M1193.6 195.3l8 -8M1246.2 195.3l8 -8M1322.5 195.3l8 -8M1400 195.3l8 -8M1443 195.3l8 -8M1540 195.3l8 -8M466 233.3H593.2M1544 233.3H1611M548 229.3l8 8M1581.9 229.3l8 8M466 324.8H593.2M1544 324.8H1611M548 320.8l8 8M1581.9 320.8l8 8M466 366.4H593.2M1544 366.4H1611M548 362.4l8 8M1581.9 362.4l8 8M466 401.2H593.2M1544 401.2H1611M548 397.2l8 8M1581.9 397.2l8 8M466 453.9H593.2M1544 453.9H1611M548 449.9l8 8M1581.9 449.9l8 8M466 470.4H593.2M1544 470.4H1611M548 466.4l8 8M1581.9 466.4l8 8M466 478.7H593.2M1544 478.7H1611M548 474.7l8 8M1581.9 474.7l8 8M466 545.4H593.2M1544 545.4H1611M548 541.4l8 8M1581.9 541.4l8 8M466 568.8H593.2M1544 568.8H1611M548 564.8l8 8M1581.9 564.8l8 8M466 596.8H593.2M1544 596.8H1611M548 592.8l8 8M1581.9 592.8l8 8M466 649.4H593.2M1544 649.4H1611M548 645.4l8 8M1581.9 645.4l8 8M466 670H593.2M1544 670H1611M548 666l8 8M1581.9 666l8 8M466 867H593.2M1544 867H1611M548 863l8 8M1581.9 863l8 8M506.3 229.3l8 8M510.3 233.3V872M552 233.3V872M1585.9 233.3V872" stroke="#007000" stroke-width="1.600" fill="none"/>
<g stroke="#007800" stroke-width="1.500" fill="none"><polygon points="590.9,124.8 583.6,121.6 578.9,115.2 578,107.3 581.2,100 587.6,95.3 595.5,94.4 602.8,97.6 607.5,104 608.4,111.9 605.2,119.2 598.8,123.9"/><polygon points="687.9,124.8 680.6,121.6 675.9,115.2 675,107.3 678.2,100 684.6,95.3 692.5,94.4 699.8,97.6 704.5,104 705.4,111.9 702.2,119.2 695.8,123.9"/><polygon points="730.9,124.8 723.6,121.6 718.9,115.2 718,107.3 721.2,100 727.6,95.3 735.5,94.4 742.8,97.6 747.5,104 748.4,111.9 745.2,119.2 738.8,123.9"/><polygon points="808.2,124.8 800.9,121.6 796.2,115.2 795.3,107.3 798.5,100 804.9,95.3 812.8,94.4 820.1,97.6 824.8,104 825.7,111.9 822.5,119.2 816.1,123.9"/><polygon points="884.6,124.8 877.3,121.6 872.6,115.2 871.7,107.3 874.9,100 881.3,95.3 889.2,94.4 896.5,97.6 901.2,104 902.1,111.9 898.9,119.2 892.5,123.9"/><polygon points="937.3,124.8 930,121.6 925.3,115.2 924.4,107.3 927.6,100 934,95.3 941.9,94.4 949.2,97.6 953.9,104 954.8,111.9 951.6,119.2 945.2,123.9"/><polygon points="962.2,124.8 954.9,121.6 950.2,115.2 949.3,107.3 952.5,100 958.9,95.3 966.8,94.4 974.1,97.6 978.8,104 979.7,111.9 976.5,119.2 970.1,123.9"/><polygon points="1020.4,124.8 1013.1,121.6 1008.4,115.2 1007.5,107.3 1010.7,100 1017.1,95.3 1025,94.4 1032.3,97.6 1037,104 1037.9,111.9 1034.7,119.2 1028.3,123.9"/><polygon points="1095.3,124.8 1088,121.6 1083.3,115.2 1082.4,107.3 1085.6,100 1092,95.3 1099.9,94.4 1107.2,97.6 1111.9,104 1112.8,111.9 1109.6,119.2 1103.2,123.9"/><polygon points="1170.1,124.8 1162.8,121.6 1158.1,115.2 1157.2,107.3 1160.4,100 1166.8,95.3 1174.7,94.4 1182,97.6 1186.7,104 1187.6,111.9 1184.4,119.2 1178,123.9"/><polygon points="1195.3,124.8 1188,121.6 1183.3,115.2 1182.4,107.3 1185.6,100 1192,95.3 1199.9,94.4 1207.2,97.6 1211.9,104 1212.8,111.9 1209.6,119.2 1203.2,123.9"/><polygon points="1247.9,124.8 1240.6,121.6 1235.9,115.2 1235,107.3 1238.2,100 1244.6,95.3 1252.5,94.4 1259.8,97.6 1264.5,104 1265.4,111.9 1262.2,119.2 1255.8,123.9"/><polygon points="1324.2,124.8 1316.9,121.6 1312.2,115.2 1311.3,107.3 1314.5,100 1320.9,95.3 1328.8,94.4 1336.1,97.6 1340.8,104 1341.7,111.9 1338.5,119.2 1332.1,123.9"/><polygon points="1401.7,124.8 1394.4,121.6 1389.7,115.2 1388.8,107.3 1392,100 1398.4,95.3 1406.3,94.4 1413.6,97.6 1418.3,104 1419.2,111.9 1416,119.2 1409.6,123.9"/><polygon points="1444.7,124.8 1437.4,121.6 1432.7,115.2 1431.8,107.3 1435,100 1441.4,95.3 1449.3,94.4 1456.6,97.6 1461.3,104 1462.2,111.9 1459,119.2 1452.6,123.9"/><polygon points="1541.7,124.8 1534.4,121.6 1529.7,115.2 1528.8,107.3 1532,100 1538.4,95.3 1546.3,94.4 1553.6,97.6 1558.3,104 1559.2,111.9 1556,119.2 1549.6,123.9"/><polygon points="590.9,880 583.6,876.8 578.9,870.4 578,862.5 581.2,855.2 587.6,850.5 595.5,849.6 602.8,852.8 607.5,859.2 608.4,867.1 605.2,874.4 598.8,879.1"/><polygon points="824.7,880 817.4,876.8 812.7,870.4 811.8,862.5 815,855.2 821.4,850.5 829.3,849.6 836.6,852.8 841.3,859.2 842.2,867.1 839,874.4 832.6,879.1"/><polygon points="916.2,880 908.9,876.8 904.2,870.4 903.3,862.5 906.5,855.2 912.9,850.5 920.8,849.6 928.1,852.8 932.8,859.2 933.7,867.1 930.5,874.4 924.1,879.1"/><polygon points="948.1,880 940.8,876.8 936.1,870.4 935.2,862.5 938.4,855.2 944.8,850.5 952.7,849.6 960,852.8 964.7,859.2 965.6,867.1 962.4,874.4 956,879.1"/><polygon points="962.2,880 954.9,876.8 950.2,870.4 949.3,862.5 952.5,855.2 958.9,850.5 966.8,849.6 974.1,852.8 978.8,859.2 979.7,867.1 976.5,874.4 970.1,879.1"/><polygon points="1066.1,880 1058.8,876.8 1054.1,870.4 1053.2,862.5 1056.4,855.2 1062.8,850.5 1070.7,849.6 1078,852.8 1082.7,859.2 1083.6,867.1 1080.4,874.4 1074,879.1"/><polygon points="1170.1,880 1162.8,876.8 1158.1,870.4 1157.2,862.5 1160.4,855.2 1166.8,850.5 1174.7,849.6 1182,852.8 1186.7,859.2 1187.6,867.1 1184.4,874.4 1178,879.1"/><polygon points="1184,880 1176.7,876.8 1172,870.4 1171.1,862.5 1174.3,855.2 1180.7,850.5 1188.6,849.6 1195.9,852.8 1200.6,859.2 1201.5,867.1 1198.3,874.4 1191.9,879.1"/><polygon points="1216.5,880 1209.2,876.8 1204.5,870.4 1203.6,862.5 1206.8,855.2 1213.2,850.5 1221.1,849.6 1228.4,852.8 1233.1,859.2 1234,867.1 1230.8,874.4 1224.4,879.1"/><polygon points="1307.7,880 1300.4,876.8 1295.7,870.4 1294.8,862.5 1298,855.2 1304.4,850.5 1312.3,849.6 1319.6,852.8 1324.3,859.2 1325.2,867.1 1322,874.4 1315.6,879.1"/><polygon points="1541.7,880 1534.4,876.8 1529.7,870.4 1528.8,862.5 1532,855.2 1538.4,850.5 1546.3,849.6 1553.6,852.8 1558.3,859.2 1559.2,867.1 1556,874.4 1549.6,879.1"/><polygon points="472.8,235.6 469.6,242.9 463.2,247.6 455.3,248.5 448,245.3 443.3,238.9 442.4,231 445.6,223.7 452,219 459.9,218.1 467.2,221.3 471.9,227.7"/><polygon points="472.8,327.1 469.6,334.4 463.2,339.1 455.3,340 448,336.8 443.3,330.4 442.4,322.5 445.6,315.2 452,310.5 459.9,309.6 467.2,312.8 471.9,319.2"/><polygon points="472.8,368.7 469.6,376 463.2,380.7 455.3,381.6 448,378.4 443.3,372 442.4,364.1 445.6,356.8 452,352.1 459.9,351.2 467.2,354.4 471.9,360.8"/><polygon points="472.8,403.5 469.6,410.8 463.2,415.5 455.3,416.4 448,413.2 443.3,406.8 442.4,398.9 445.6,391.6 452,386.9 459.9,386 467.2,389.2 471.9,395.6"/><polygon points="472.8,456.2 469.6,463.5 463.2,468.2 455.3,469.1 448,465.9 443.3,459.5 442.4,451.6 445.6,444.3 452,439.6 459.9,438.7 467.2,441.9 471.9,448.3"/><polygon points="472.8,472.7 469.6,480 463.2,484.7 455.3,485.6 448,482.4 443.3,476 442.4,468.1 445.6,460.8 452,456.1 459.9,455.2 467.2,458.4 471.9,464.8"/><polygon points="472.8,481 469.6,488.3 463.2,493 455.3,493.9 448,490.7 443.3,484.3 442.4,476.4 445.6,469.1 452,464.4 459.9,463.5 467.2,466.7 471.9,473.1"/><polygon points="472.8,547.7 469.6,555 463.2,559.7 455.3,560.6 448,557.4 443.3,551 442.4,543.1 445.6,535.8 452,531.1 459.9,530.2 467.2,533.4 471.9,539.8"/><polygon points="472.8,571.1 469.6,578.4 463.2,583.1 455.3,584 448,580.8 443.3,574.4 442.4,566.5 445.6,559.2 452,554.5 459.9,553.6 467.2,556.8 471.9,563.2"/><polygon points="472.8,599.1 469.6,606.4 463.2,611.1 455.3,612 448,608.8 443.3,602.4 442.4,594.5 445.6,587.2 452,582.5 459.9,581.6 467.2,584.8 471.9,591.2"/><polygon points="472.8,651.7 469.6,659 463.2,663.7 455.3,664.6 448,661.4 443.3,655 442.4,647.1 445.6,639.8 452,635.1 459.9,634.2 467.2,637.4 471.9,643.8"/><polygon points="472.8,672.3 469.6,679.6 463.2,684.3 455.3,685.2 448,682 443.3,675.6 442.4,667.7 445.6,660.4 452,655.7 459.9,654.8 467.2,658 471.9,664.4"/><polygon points="472.8,869.3 469.6,876.6 463.2,881.3 455.3,882.2 448,879 443.3,872.6 442.4,864.7 445.6,857.4 452,852.7 459.9,851.8 467.2,855 471.9,861.4"/></g>
<g fill="#fff" font-size="24.2" text-anchor="middle"><text transform="translate(593.2 117.8) scale(0.927 1)">1</text><text transform="translate(690.2 117.8) scale(0.927 1)">2</text><text transform="translate(733.2 117.8) scale(0.927 1)">3</text><text transform="translate(810.5 117.8) scale(0.927 1)">4</text><text transform="translate(886.9 117.8) scale(0.927 1)">6</text><text transform="translate(939.6 117.8) scale(0.927 1)">8</text><text transform="translate(964.5 117.8) scale(0.927 1)">10</text><text transform="translate(1022.7 117.8) scale(0.927 1)">11</text><text transform="translate(1097.6 117.8) scale(0.927 1)">13</text><text transform="translate(1172.4 117.8) scale(0.927 1)">14</text><text transform="translate(1197.6 117.8) scale(0.927 1)">16</text><text transform="translate(1250.2 117.8) scale(0.927 1)">18</text><text transform="translate(1326.5 117.8) scale(0.927 1)">20</text><text transform="translate(1404 117.8) scale(0.927 1)">21</text><text transform="translate(1447 117.8) scale(0.927 1)">22</text><text transform="translate(1544 117.8) scale(0.927 1)">23</text><text transform="translate(593.2 873.1) scale(0.927 1)">1</text><text transform="translate(827 873.1) scale(0.927 1)">5</text><text transform="translate(918.5 873.1) scale(0.927 1)">7</text><text transform="translate(950.4 873.1) scale(0.927 1)">9</text><text transform="translate(964.5 873.1) scale(0.927 1)">10</text><text transform="translate(1068.4 873.1) scale(0.927 1)">12</text><text transform="translate(1172.4 873.1) scale(0.927 1)">14</text><text transform="translate(1186.3 873.1) scale(0.927 1)">15</text><text transform="translate(1218.8 873.1) scale(0.927 1)">17</text><text transform="translate(1310 873.1) scale(0.927 1)">19</text><text transform="translate(1544 873.1) scale(0.927 1)">23</text><text transform="translate(457.6 240.3) scale(0.927 1)">Q</text><text transform="translate(457.6 331.8) scale(0.927 1)">P</text><text transform="translate(457.6 373.4) scale(0.927 1)">N</text><text transform="translate(457.6 408.2) scale(0.927 1)">M</text><text transform="translate(457.6 460.9) scale(0.927 1)">L</text><text transform="translate(457.6 477.4) scale(0.927 1)">K</text><text transform="translate(457.6 485.7) scale(0.927 1)">J</text><text transform="translate(457.6 552.4) scale(0.927 1)">H</text><text transform="translate(457.6 575.8) scale(0.927 1)">G</text><text transform="translate(457.6 603.8) scale(0.927 1)">F</text><text transform="translate(457.6 656.4) scale(0.927 1)">E</text><text transform="translate(457.6 677) scale(0.927 1)">D</text><text transform="translate(457.6 874) scale(0.927 1)">C</text><text transform="translate(1068.6 138.5) scale(0.927 1)">34300</text><text transform="translate(641.7 179.4) scale(0.927 1)">3500</text><text transform="translate(711.7 179.4) scale(0.927 1)">1550</text><text transform="translate(771.9 179.4) scale(0.927 1)">2800</text><text transform="translate(848.7 179.4) scale(0.927 1)">2750</text><text transform="translate(913.2 179.4) scale(0.927 1)">1900</text><text transform="translate(952 179.4) scale(0.927 1)">900</text><text transform="translate(993.6 179.4) scale(0.927 1)">2100</text><text transform="translate(1060.2 179.4) scale(0.927 1)">2700</text><text transform="translate(1135 179.4) scale(0.927 1)">2700</text><text transform="translate(1185 179.4) scale(0.927 1)">900</text><text transform="translate(1223.9 179.4) scale(0.927 1)">1900</text><text transform="translate(1288.3 179.4) scale(0.927 1)">2750</text><text transform="translate(1365.2 179.4) scale(0.927 1)">2800</text><text transform="translate(1425.5 179.4) scale(0.927 1)">1550</text><text transform="translate(1495.5 179.4) scale(0.927 1)">3500</text><text transform="translate(539.8 279.1) rotate(-90) scale(0.927 1)">3300</text><text transform="translate(1615 279.1) rotate(-90) scale(0.927 1)">3300</text><text transform="translate(539.8 345.6) rotate(-90) scale(0.927 1)">1500</text><text transform="translate(1615 345.6) rotate(-90) scale(0.927 1)">1500</text><text transform="translate(539.8 383.8) rotate(-90) scale(0.927 1)">1250</text><text transform="translate(1615 383.8) rotate(-90) scale(0.927 1)">1250</text><text transform="translate(539.8 427.5) rotate(-90) scale(0.927 1)">1900</text><text transform="translate(1615 427.5) rotate(-90) scale(0.927 1)">1900</text><text transform="translate(539.8 462.1) rotate(-90) scale(0.927 1)">600</text><text transform="translate(1615 462.1) rotate(-90) scale(0.927 1)">600</text><text transform="translate(539.8 474.5) rotate(-90) scale(0.927 1)">300</text><text transform="translate(1615 474.5) rotate(-90) scale(0.927 1)">300</text><text transform="translate(539.8 512) rotate(-90) scale(0.927 1)">2400</text><text transform="translate(1615 512) rotate(-90) scale(0.927 1)">2400</text><text transform="translate(539.8 557.1) rotate(-90) scale(0.927 1)">850</text><text transform="translate(1615 557.1) rotate(-90) scale(0.927 1)">850</text><text transform="translate(539.8 582.8) rotate(-90) scale(0.927 1)">1000</text><text transform="translate(1615 582.8) rotate(-90) scale(0.927 1)">1000</text><text transform="translate(539.8 623.1) rotate(-90) scale(0.927 1)">1900</text><text transform="translate(1615 623.1) rotate(-90) scale(0.927 1)">1900</text><text transform="translate(539.8 659.7) rotate(-90) scale(0.927 1)">750</text><text transform="translate(1615 659.7) rotate(-90) scale(0.927 1)">750</text><text transform="translate(539.8 768.5) rotate(-90) scale(0.927 1)">7100</text><text transform="translate(1615 768.5) rotate(-90) scale(0.927 1)">7100</text><text transform="translate(498 572.5) rotate(-90) scale(0.927 1)">24450</text></g>
<g><path d="M504.800 817V792" stroke="#00f000" stroke-width="5.300"/><path d="M498 793.500L504.800 779.500L511.600 793.500Z" fill="#00f000"/><path d="M504.800 817.100H528.500" stroke="#ff0000" stroke-width="5.600"/><path d="M527.500 810.500L543 817.100L527.500 823.700Z" fill="#ff0000"/><circle cx="504.600" cy="817.200" r="6.800" fill="#0000c4"/><text transform="translate(504.800 779) scale(0.9 1)" font-size="20.500" fill="#00e000" text-anchor="middle">Y</text><text transform="translate(550.600 824.700) scale(0.9 1)" font-size="21" fill="#ff0000" text-anchor="middle">X</text></g>
</svg>
<svg class="abs" style="left:120px;top:140px;pointer-events:none" width="200" height="200" viewBox="120 140 200 200"><path d="M150.500 181 C156 181 162 180 169.300 176.700 C176 171 180 166 186.500 161.800 C191 158 194 156 199 155 C205 154 210 154.500 216.300 155 C224 156 232 157 239.300 159.500 C249 163 258 167 266.800 173.300 C275 179 283 185 289.700 191.600 C296 199 300 206 302.300 213.400 C304 221 303.500 229 303.500 236.300 C303.500 244 304 252 302.300 259.300 C300 268 297 275 294.300 282.200 C290 290 285 296 280.600 302.800 C277 308 273 313 269 317.800 C266 321 263 323 260 323.500 C253 324.500 246 324 239.300 323.500 C230 322.500 221 321.500 211.700 320 C203 318.500 195 317 186.500 314.300 C179 312 172 309 165.900 305 C158 300 151 295 145.200 289 C140 283 136 276 133.800 268.400 C132 262 131 256 131 250 C130.500 242 131 234 131.500 227 C132 220 133 214 135 208.800 C136.500 203 138 198 140.600 192.700 C143 188 145 185 148.700 182.400 C150.500 181 152.500 180.500 153.500 181.800 C154.800 183.500 155.800 184.800 156.800 185.800" fill="none" stroke="#f5150f" stroke-width="3.200" stroke-linecap="round" stroke-linejoin="round"/></svg>
</body>
</html>
